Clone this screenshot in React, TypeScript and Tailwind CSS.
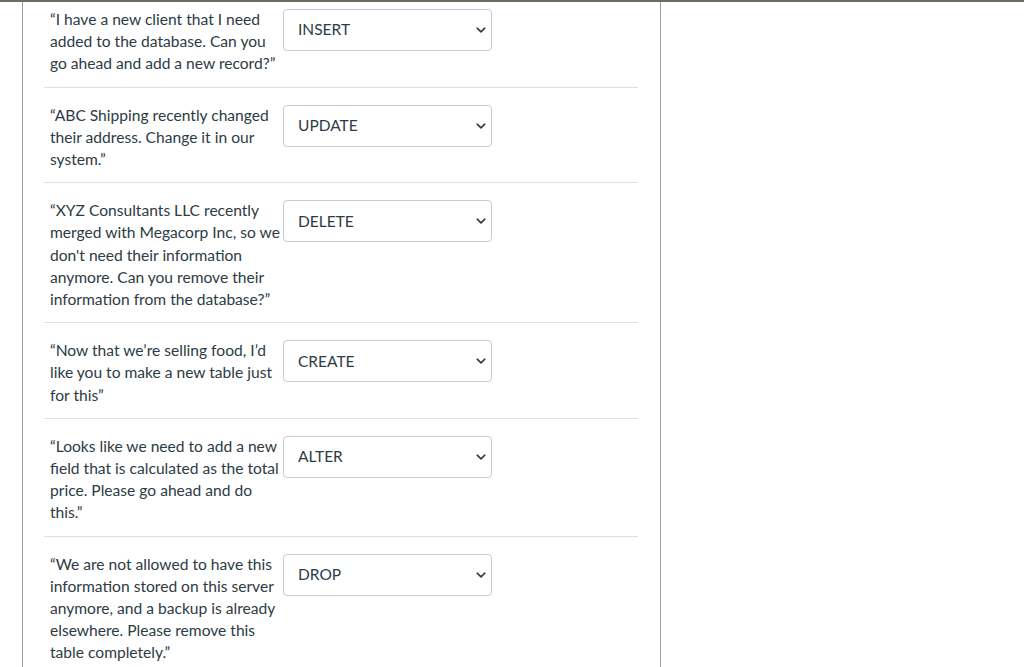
import React from "react";

type TRow = {
  prompt: string;
  answer: string;
};

const rows: TRow[] = [
  {
    prompt: "“I have a new client that I need added to the database. Can you go ahead and add a new record?”",
    answer: "INSERT",
  },
  {
    prompt: "“ABC Shipping recently changed their address. Change it in our system.”",
    answer: "UPDATE",
  },
  {
    prompt:
      "“XYZ Consultants LLC recently merged with Megacorp Inc, so we don't need their information anymore. Can you remove their information from the database?”",
    answer: "DELETE",
  },
  {
    prompt: "“Now that we’re selling food, I’d like you to make a new table just for this”",
    answer: "CREATE",
  },
  {
    prompt:
      "“Looks like we need to add a new field that is calculated as the total price. Please go ahead and do this.”",
    answer: "ALTER",
  },
  {
    prompt:
      "“We are not allowed to have this information stored on this server anymore, and a backup is already elsewhere. Please remove this table completely.”",
    answer: "DROP",
  },
];

const Chevron = () => (
  <svg width="10" height="6" viewBox="0 0 10 6" className="text-[#2d3b45]">
    <path d="M1.2 1.2l3.8 3.6 3.8-3.6" fill="none" stroke="currentColor" strokeWidth="1.6" strokeLinecap="round" strokeLinejoin="round" />
  </svg>
);

const AnswerSelect = ({ value }: { value: string }) => (
  <div className="w-[209px] h-[42px] shrink-0 rounded border border-[#c7cdd1] bg-white flex items-center justify-between pl-[14px] pr-[5px] mt-px">
    <span className="text-[15.5px] text-[#2d3b45]">{value}</span>
    <Chevron />
  </div>
);

const App = () => {
  return (
    <div className="w-[1024px] h-[667px] overflow-hidden bg-white font-['Lato','Noto_Sans',sans-serif]">
      <div className="h-[2px] bg-[#6b6b60]" />
      <div className="ml-[22px] w-[639px] h-[665px] border-l border-r border-[#9e9e9e] pl-[21px] pr-[22px]">
        {rows.map((row, i) => (
          <div
            key={row.answer}
            className={`flex items-start pl-[6px] ${i === 0 ? "pt-[6px]" : "pt-4"} pb-3 ${
              i < rows.length - 1 ? "border-b border-[#dde0e3]" : ""
            }`}
          >
            <p className="w-[233px] text-[15.6px] leading-[22.2px] text-[#2d3b45]">{row.prompt}</p>
            <AnswerSelect value={row.answer} />
          </div>
        ))}
      </div>
    </div>
  );
};

export default App;
